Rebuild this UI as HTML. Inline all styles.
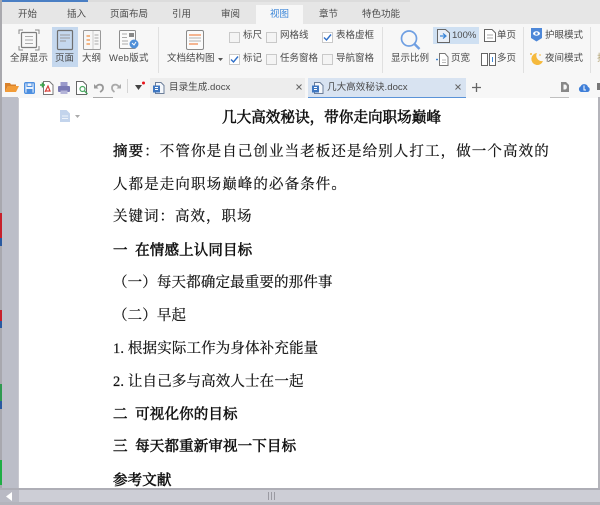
<!DOCTYPE html>
<html><head><meta charset="utf-8">
<style>
html,body{margin:0;padding:0;background:#fff}
body{width:600px;height:505px;overflow:hidden;position:relative}
#w{position:absolute;left:0;top:0;width:600px;height:505px;overflow:hidden;background:#fff;filter:blur(.35px);font-family:"Liberation Sans","Noto Sans CJK SC",sans-serif;color:#444}
.a{position:absolute;white-space:nowrap}
.t{position:absolute;white-space:nowrap;font-size:9.500px;line-height:14px;color:#4a4a4a}
.d{position:absolute;left:113px;white-space:nowrap;font-family:"Liberation Serif","Noto Serif CJK SC",serif;font-size:14.500px;line-height:20px;color:#111;letter-spacing:.14px;-webkit-text-stroke:.2px #111}
.b{-webkit-text-stroke:.55px #111}
.m{-webkit-text-stroke:.4px #111}
.c{position:absolute;width:9px;height:9px;border:1px solid #c9c9c9;background:#f4f4f4}
svg{position:absolute;overflow:visible}
</style></head><body><div id="w">
<!-- top -->
<div class="a" style="left:0;top:0;width:600px;height:24px;background:#e6e6e6"></div>
<div class="a" style="left:0;top:0;width:88px;height:2px;background:#4a7fc4"></div>
<div class="a" style="left:88px;top:0;width:322px;height:2px;background:#dcdcdc"></div>
<div class="a" style="left:256px;top:5px;width:47px;height:19px;background:#f7f7f7"></div>
<div class="a" style="left:0;top:24px;width:600px;height:50px;background:#f7f7f7"></div>
<div class="a" style="left:0;top:74px;width:600px;height:24px;background:#f7f7f7"></div>
<div class="a" style="left:0;top:0;width:2px;height:97px;background:#a9a9ae"></div>
<div class="t" style="left:18px;top:8px">开始</div>
<div class="t" style="left:67px;top:8px">插入</div>
<div class="t" style="left:110px;top:8px">页面布局</div>
<div class="t" style="left:172px;top:8px">引用</div>
<div class="t" style="left:221px;top:8px">审阅</div>
<div class="t" style="left:270px;top:8px;color:#3b86d8">视图</div>
<div class="t" style="left:319px;top:8px">章节</div>
<div class="t" style="left:362px;top:8px">特色功能</div>
<!-- ribbon highlights -->
<div class="a" style="left:52px;top:27px;width:26px;height:40px;background:#c5d8ee"></div>
<div class="a" style="left:433px;top:27px;width:46px;height:17px;background:#cfe0f2"></div>
<!-- separators -->
<div class="a" style="left:158px;top:27px;width:1px;height:46px;background:#e0e0e0"></div>
<div class="a" style="left:382px;top:27px;width:1px;height:46px;background:#e0e0e0"></div>
<div class="a" style="left:523px;top:27px;width:1px;height:46px;background:#e0e0e0"></div>
<div class="a" style="left:590px;top:27px;width:1px;height:46px;background:#e0e0e0"></div>
<!-- full screen icon -->
<svg style="left:18px;top:29px" width="22" height="22" fill="none" stroke="#7d7d7d"><path d="M1 5V1H5M17 1H21V5M21 17V21H17M5 21H1V17" stroke="#8a8a8a"/><rect x="3.500" y="3.500" width="15" height="15" rx="1" stroke-width="1.200"/><path d="M7 7.500H15M7 11H15M7 14.500H15" stroke="#aaa"/></svg>
<!-- page -->
<svg style="left:57px;top:30px" width="16" height="20" fill="none" stroke="#6f6f6f"><rect x=".5" y=".5" width="15" height="19" rx="1" stroke-width="1.200"/><path d="M3 5H13M3 8H13M3 11H9" stroke="#999"/></svg>
<!-- outline -->
<svg style="left:83px;top:30px" width="18" height="20" fill="none"><rect x=".5" y=".5" width="17" height="19" rx="1" stroke="#9a9a9a"/><path d="M10 1V19" stroke="#ccc"/><path d="M3.500 6H7M3.500 10H7M3.500 14H7" stroke="#f0a060" stroke-width="1.400"/><path d="M11.500 5H15.500M11.500 8H15.500M11.500 11H15.500M11.500 14H15.500" stroke="#aaa"/></svg>
<!-- web -->
<svg style="left:119px;top:30px" width="21" height="20" fill="none"><rect x=".5" y=".5" width="16" height="18" rx="1" stroke="#8d8d8d" fill="#fafafa"/><path d="M3 4H8M3 7.500H8M3 11H9M3 14H9" stroke="#aaa"/><rect x="10" y="3" width="5" height="4" fill="#888"/><circle cx="15" cy="14" r="4.500" fill="#4f8fd8"/><path d="M13 13L15 15L17 12" stroke="#fff"/></svg>
<div class="t" style="left:10px;top:52px">全屏显示</div>
<div class="t" style="left:55px;top:52px">页面</div>
<div class="t" style="left:82px;top:52px">大纲</div>
<div class="t" style="left:109px;top:52px;letter-spacing:.3px">Web版式</div>
<!-- doc structure -->
<svg style="left:186px;top:30px" width="18" height="20" fill="none"><rect x=".5" y=".5" width="17" height="19" rx="1.500" stroke="#8a8a8a" fill="#fbfbfb"/><path d="M3 5H15M3 14H12" stroke="#ef8a4f" stroke-width="1.200"/><path d="M3 8H15M3 11H15" stroke="#b0b0b0"/></svg>
<div class="t" style="left:167px;top:52px">文档结构图</div>
<svg style="left:218px;top:58px" width="5" height="3"><path d="M0 0H5L2.500 3Z" fill="#555"/></svg>
<!-- checks -->
<div class="c" style="left:229px;top:32px"></div><div class="t" style="left:243px;top:29px">标尺</div>
<div class="c" style="left:266px;top:32px"></div><div class="t" style="left:280px;top:29px">网格线</div>
<div class="c" style="left:322px;top:32px;background:#fff"></div><div class="t" style="left:336px;top:29px">表格虚框</div>
<svg style="left:323px;top:33px" width="9" height="9" fill="none"><path d="M1 4.500L3.500 7L8 1.500" stroke="#2f6fc8" stroke-width="1.400"/></svg>
<div class="c" style="left:229px;top:54px;background:#fff"></div><div class="t" style="left:243px;top:52px">标记</div>
<svg style="left:230px;top:55px" width="9" height="9" fill="none"><path d="M1 4.500L3.500 7L8 1.500" stroke="#2f6fc8" stroke-width="1.400"/></svg>
<div class="c" style="left:266px;top:54px"></div><div class="t" style="left:280px;top:52px">任务窗格</div>
<div class="c" style="left:322px;top:54px"></div><div class="t" style="left:336px;top:52px">导航窗格</div>
<!-- zoom -->
<svg style="left:400px;top:30px" width="21" height="20" fill="none" stroke="#6f9fe2"><circle cx="9" cy="8.500" r="7.500" stroke-width="1.700"/><path d="M14.500 14L19.500 19" stroke-width="2.400"/></svg>
<div class="t" style="left:391px;top:52px">显示比例</div>
<svg style="left:437px;top:29px" width="13" height="14" fill="none"><path d="M.5 .5H8.500L12.500 4V13.500H.5Z" stroke="#666" fill="#e9eff7"/><path d="M3 7H8M6 4.500L9 7L6 9.500" stroke="#3b86d8" stroke-width="1.200"/></svg>
<div class="t" style="left:452px;top:29px">100%</div>
<svg style="left:484px;top:29px" width="12" height="13" fill="none"><path d="M.5 .5H8L11.500 4V12.500H.5Z" stroke="#666" fill="#fff"/><path d="M3 6H9M3 9H9" stroke="#aaa"/></svg>
<div class="t" style="left:497px;top:29px">单页</div>
<svg style="left:436px;top:53px" width="14" height="13" fill="none"><path d="M3.500 .5H9L12 4V12.500H3.500Z" stroke="#777" fill="#fff"/><path d="M6 7H10M6 9.500H10" stroke="#bbb"/><path d="M0 6.500H2" stroke="#3b86d8" stroke-width="1.400"/></svg>
<div class="t" style="left:451px;top:52px">页宽</div>
<svg style="left:481px;top:53px" width="15" height="13" fill="none"><rect x=".5" y=".5" width="6" height="12" stroke="#666" fill="#fff"/><rect x="8.500" y=".5" width="6" height="12" stroke="#666" fill="#fff"/><path d="M11.500 4V9" stroke="#3b86d8"/></svg>
<div class="t" style="left:497px;top:52px">多页</div>
<!-- eye, night -->
<svg style="left:531px;top:28px" width="11" height="14"><path d="M0 0H11V10L5.500 13.500L0 10Z" fill="#4d87d8"/><ellipse cx="5.500" cy="5.500" rx="3.500" ry="2.200" fill="#fff"/><circle cx="5.500" cy="5.500" r="1.300" fill="#4d87d8"/></svg>
<div class="t" style="left:545px;top:29px">护眼模式</div>
<svg style="left:529px;top:51px" width="15" height="15"><path d="M8 2A6 6 0 1 0 14 10A5.500 5.500 0 0 1 8 2Z" fill="#f5b93c"/><path d="M2 2V4M1 3H3M11 3V5" stroke="#f5b93c"/></svg>
<div class="t" style="left:545px;top:52px">夜间模式</div>
<div class="t" style="left:597px;top:52px;color:#b0a070">护</div>
<!-- toolbar icons -->
<svg style="left:5px;top:82px" width="14" height="12"><path d="M0 1H5L6 2.500H11V4H3L0 10Z" fill="#d9822b"/><path d="M3 4H14L11 10H0Z" fill="#f29c38"/></svg>
<svg style="left:24px;top:82px" width="11" height="12" fill="none"><rect x=".7" y=".7" width="9.600" height="10.600" rx="1" stroke="#4d8fe0" stroke-width="1.400" fill="#eaf2fc"/><path d="M3 1V4.500H8V1" stroke="#4d8fe0"/><rect x="2.500" y="7" width="6" height="4" fill="#4d8fe0"/></svg>
<svg style="left:40px;top:81px" width="14" height="14" fill="none"><path d="M3.500 .5H9.500L13 4V13.500H3.500Z" stroke="#777" fill="#fff"/><path d="M5 11L8 5L10 10H6" stroke="#d9403a" stroke-width="1.200"/><path d="M0 4H5M2.500 1.500V6.500" stroke="#3aa64a" stroke-width="1.500"/></svg>
<svg style="left:58px;top:82px" width="12" height="13"><rect x="2.500" y="0" width="7" height="4" fill="#9a9acb"/><rect x="0" y="4" width="12" height="6" rx="1" fill="#7a7ab5"/><rect x="2.500" y="8.500" width="7" height="3.500" fill="#b4b4d8"/></svg>
<svg style="left:76px;top:81px" width="13" height="14" fill="none"><path d="M.5 .5H7L10.500 4V13.500H.5Z" stroke="#666" fill="#fff"/><circle cx="6.500" cy="8" r="2.500" stroke="#4aa860" stroke-width="1.200"/><path d="M8.500 10L11.500 13" stroke="#4aa860" stroke-width="1.400"/></svg>
<svg style="left:94px;top:83px" width="10" height="10" fill="none"><path d="M2 4C4 .5 9 1 9 5C9 7 8 8 6 9" stroke="#999" stroke-width="1.800"/><path d="M0 1V5.500H4.500Z" fill="#999"/></svg>
<svg style="left:111px;top:83px" width="10" height="10" fill="none"><path d="M8 4C6 .5 1 1 1 5C1 7 2 8 3.500 9" stroke="#aaa" stroke-width="1.800"/><path d="M10 1V5.500H5.500Z" fill="#aaa"/></svg>
<div class="a" style="left:127px;top:79px;width:1px;height:14px;background:#d5d5d5"></div>
<svg style="left:135px;top:81px" width="11" height="9"><path d="M0 4H7L3.500 9Z" fill="#444"/><circle cx="8.500" cy="2" r="1.500" fill="#e8141c"/></svg>
<!-- doc tabs -->
<div class="a" style="left:150px;top:78px;width:155px;height:20px;background:#ededed"></div>
<svg style="left:153px;top:82px" width="12" height="12" fill="none"><path d="M2.500 .5H8L11 3.500V11.500H2.500Z" stroke="#6d7f9a" fill="#f4f7fb"/><rect x="0" y="3.500" width="7" height="7" fill="#3f77c0"/><path d="M2 5.500H5M2 7.500H5" stroke="#fff"/></svg>
<div class="t" style="left:169px;top:80px;line-height:15px;font-size:9.600px">目录生成.docx</div>
<svg style="left:296px;top:84px" width="6" height="6" fill="none"><path d="M.5 .5L5.500 5.500M5.500 .5L.5 5.500" stroke="#666"/></svg>
<div class="a" style="left:308px;top:78px;width:158px;height:19px;background:#d8e3f1;border-bottom:1px solid #5a93d8"></div>
<svg style="left:312px;top:82px" width="12" height="12" fill="none"><path d="M2.500 .5H8L11 3.500V11.500H2.500Z" stroke="#6d7f9a" fill="#f4f7fb"/><rect x="0" y="3.500" width="7" height="7" fill="#3f77c0"/><path d="M2 5.500H5M2 7.500H5" stroke="#fff"/></svg>
<div class="t" style="left:327px;top:80px;line-height:15px;font-size:9.600px">几大高效秘诀.docx</div>
<svg style="left:455px;top:84px" width="6" height="6" fill="none"><path d="M.5 .5L5.500 5.500M5.500 .5L.5 5.500" stroke="#666"/></svg>
<svg style="left:472px;top:83px" width="9" height="9" fill="none"><path d="M4.500 0V9M0 4.500H9" stroke="#666" stroke-width="1.300"/></svg>
<svg style="left:560px;top:82px" width="10" height="10"><path d="M1 0H6L9 3V10H1Z" fill="#888"/><path d="M3.500 2.500V7.500H5C7.500 7.500 7.500 2.500 5 2.500Z" fill="#f7f7f7"/></svg>
<svg style="left:578px;top:82px" width="12" height="10"><path d="M3 10A3 3 0 0 1 2.500 4.500A4 4 0 0 1 10 5A2.600 2.600 0 0 1 9.500 10Z" fill="#3f7fd8"/><path d="M6 3.500V8H8" stroke="#fff" fill="none"/></svg>
<div class="a" style="left:597px;top:83px;width:3px;height:7px;background:#777"></div>
<!-- document area -->
<div class="a" style="left:0;top:97px;width:18px;height:391px;background:#bcbec8"></div>
<div class="a" style="left:0;top:97px;width:2px;height:391px;background:#a8a8ae"></div>
<div class="a" style="left:0;top:213px;width:2px;height:25px;background:#c8202a"></div>
<div class="a" style="left:0;top:238px;width:2px;height:8px;background:#2a5aa0"></div>
<div class="a" style="left:0;top:310px;width:2px;height:11px;background:#c8202a"></div>
<div class="a" style="left:0;top:321px;width:2px;height:7px;background:#2a5aa0"></div>
<div class="a" style="left:0;top:384px;width:2px;height:17px;background:#2f9a50"></div>
<div class="a" style="left:0;top:401px;width:2px;height:8px;background:#2a5aa0"></div>
<div class="a" style="left:0;top:460px;width:2px;height:25px;background:#1fae45"></div>
<div class="a" style="left:18px;top:98px;width:1px;height:390px;background:#c9c9d0"></div>
<div class="a" style="left:93px;top:97px;width:20px;height:1px;background:#aaa"></div>
<div class="a" style="left:550px;top:97px;width:19px;height:1px;background:#c0c0c0"></div>
<div class="a" style="left:598px;top:97px;width:2px;height:391px;background:#b4b4ba"></div>
<svg style="left:60px;top:110px" width="10" height="12"><path d="M0 0H6.500L10 3.500V12H0Z" fill="#c3d4ec"/><path d="M2 6H8M2 8.500H8" stroke="#eef3fa"/></svg>
<svg style="left:75px;top:115px" width="5" height="3"><path d="M0 0H5L2.500 3Z" fill="#aaa"/></svg>
<!-- text -->
<div class="d b" style="left:222px;top:108px;font-size:14.600px;letter-spacing:0">几大高效秘诀，带你走向职场巅峰</div>
<div class="d" style="top:142px;letter-spacing:1.100px"><span class="m">摘要</span>：不管你是自己创业当老板还是给别人打工，做一个高效的</div>
<div class="d" style="top:175px;letter-spacing:1.100px">人都是走向职场巅峰的必备条件。</div>
<div class="d" style="top:207px;letter-spacing:1px">关键词：高效，职场</div>
<div class="d b" style="top:241px">一&nbsp; 在情感上认同目标</div>
<div class="d" style="top:273px">（一）每天都确定最重要的那件事</div>
<div class="d" style="top:306px">（二）早起</div>
<div class="d" style="top:339px">1.&nbsp;根据实际工作为身体补充能量</div>
<div class="d" style="top:372px">2.&nbsp;让自己多与高效人士在一起</div>
<div class="d b" style="top:405px">二&nbsp; 可视化你的目标</div>
<div class="d b" style="top:437px">三&nbsp; 每天都重新审视一下目标</div>
<div class="d b" style="top:471px">参考文献</div>
<!-- scrollbar -->
<div class="a" style="left:0;top:488px;width:600px;height:17px;background:#cdced6"></div>
<div class="a" style="left:0;top:488px;width:600px;height:2px;background:#aeaeb6"></div>
<div class="a" style="left:0;top:502px;width:600px;height:3px;background:#b4b4bc"></div>
<div class="a" style="left:0;top:490px;width:19px;height:12px;background:#b9bac4"></div>
<svg style="left:6px;top:492px" width="6" height="9"><path d="M6 0V9L0 4.500Z" fill="#fff"/></svg>
<svg style="left:268px;top:492px" width="8" height="8" fill="none" stroke="#9a9aa2"><path d="M.5 0V8M3.500 0V8M6.500 0V8"/></svg>
</div></body></html>
